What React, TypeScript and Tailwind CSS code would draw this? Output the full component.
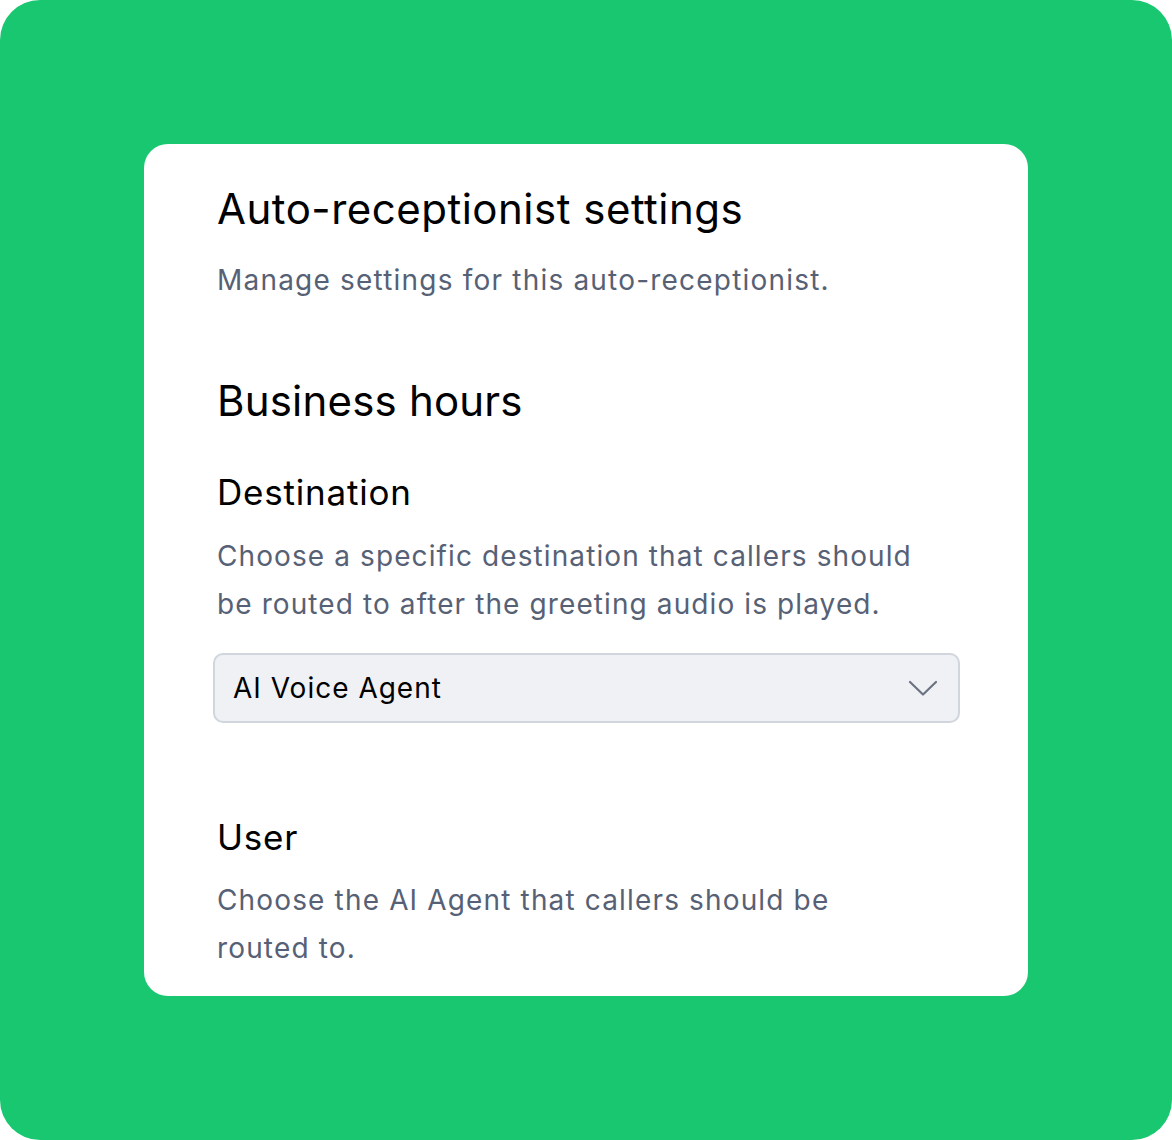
export default function App() {
  return (
    <div className="w-[1172px] h-[1140px] bg-white" style={{ fontFamily: "Inter, 'Noto Sans', sans-serif" }}>
      <div className="w-full h-full rounded-[40px] bg-[#1AC771] pt-[144px] pl-[144px]">
        <div className="w-[884px] h-[852px] overflow-hidden rounded-[24px] bg-white pl-[73px] pr-[40px] pt-[37px]">
          <h1 className="text-[42px] leading-[56px] tracking-[0.5px] text-black">Auto-receptionist settings</h1>
          <p className="mt-[19px] text-[28px] leading-[48px] tracking-[1.2px] text-[#576175]">Manage settings for this auto-receptionist.</p>
          <h2 className="mt-[69px] text-[42px] leading-[56px] tracking-[0.2px] text-black">Business hours</h2>
          <h3 className="mt-[39px] text-[35px] leading-[48px] tracking-[0.8px] text-black">Destination</h3>
          <p className="mt-[16px] max-w-[730px] text-[28px] leading-[48px] tracking-[1.1px] text-[#576175]">
            Choose a specific destination that callers should be routed to after the greeting audio is played.
          </p>
          <div className="mt-[25px] -ml-[4px] flex h-[70px] w-[747px] items-center justify-between rounded-[10px] border-2 border-[#d0d5de] bg-[#f0f1f5] pl-[18px] pr-[20px]">
            <span className="text-[28px] tracking-[1px] text-black">AI Voice Agent</span>
            <svg width="30" height="18" viewBox="0 0 30 18" fill="none">
              <path d="M2 3 L15 15.5 L28 3" stroke="#6b7280" strokeWidth="2.2" strokeLinecap="round" strokeLinejoin="round" />
            </svg>
          </div>
          <h3 className="mt-[90px] text-[35px] leading-[48px] tracking-[0.8px] text-black">User</h3>
          <p className="mt-[15px] max-w-[670px] text-[28px] leading-[48px] tracking-[1.15px] text-[#576175]">
            Choose the AI Agent that callers should be routed to.
          </p>
        </div>
      </div>
    </div>
  );
}
